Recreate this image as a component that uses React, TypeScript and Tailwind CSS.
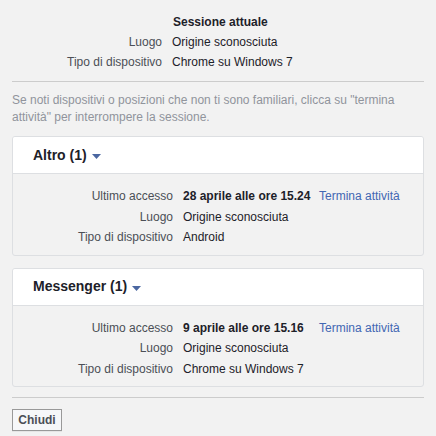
import { ReactNode } from "react";

interface Row {
  label: string;
  value: ReactNode;
  bold?: boolean;
  link?: string;
}

const Caret = () => (
  <svg width="9" height="5" viewBox="0 0 9 5" className="ml-[5px] mt-[3px]">
    <path d="M0 0 H9 L4.5 5 Z" fill="#4b67a1" />
  </svg>
);

const SessionCard = ({ title, rows }: { title: string; rows: Row[] }) => (
  <div className="border border-[#dddfe2] rounded-[3px] bg-[#f2f2f2] overflow-hidden">
    <div className="h-[37px] bg-white border-b border-[#dddfe2] pl-5 flex items-center">
      <span className="text-[14px] font-bold text-[#1d2129]">{title}</span>
      <Caret />
    </div>
    <div className="pt-[12px] pb-[7px]">
      {rows.map((r) => (
        <div key={r.label} className="flex h-[20.5px] items-center text-[12px]">
          <div className="w-[160px] text-right text-[#4b4f56]">{r.label}</div>
          <div
            className={`ml-[10px] w-[136px] text-[#1d2129] ${r.bold ? "font-bold" : ""}`}
          >
            {r.value}
          </div>
          {r.link && <div className="text-[#4267b2]">{r.link}</div>}
        </div>
      ))}
    </div>
  </div>
);

export default function App() {
  return (
    <div
      className="w-[436px] h-[436px] bg-[#f2f2f2] px-3 pt-[12px] text-[#1d2129]"
      style={{ fontFamily: '"Liberation Sans", Arial, sans-serif' }}
    >
      <div className="text-[12px]">
        <div className="flex h-[20px] items-center">
          <div className="w-[150px]" />
          <div className="ml-[11px] font-bold text-[#1d2129]">Sessione attuale</div>
        </div>
        <div className="flex h-[20px] items-center">
          <div className="w-[150px] text-right text-[#4b4f56]">Luogo</div>
          <div className="ml-[10px]">Origine sconosciuta</div>
        </div>
        <div className="flex h-[20px] items-center">
          <div className="w-[150px] text-right text-[#4b4f56]">Tipo di dispositivo</div>
          <div className="ml-[10px]">Chrome su Windows 7</div>
        </div>
      </div>

      <div className="mt-[9px] border-t border-[#cccccc]" />

      <p className="mt-[10px] text-[12px] leading-[17px] text-[#90949c]">
        Se noti dispositivi o posizioni che non ti sono familiari, clicca su "termina
        attività" per interrompere la sessione.
      </p>

      <div className="mt-[10px] flex flex-col gap-[12px]">
        <SessionCard
          title="Altro (1)"
          rows={[
            { label: "Ultimo accesso", value: "28 aprile alle ore 15.24", bold: true, link: "Termina attività" },
            { label: "Luogo", value: "Origine sconosciuta" },
            { label: "Tipo di dispositivo", value: "Android" },
          ]}
        />
        <SessionCard
          title="Messenger (1)"
          rows={[
            { label: "Ultimo accesso", value: "9 aprile alle ore 15.16", bold: true, link: "Termina attività" },
            { label: "Luogo", value: "Origine sconosciuta" },
            { label: "Tipo di dispositivo", value: "Chrome su Windows 7" },
          ]}
        />
      </div>

      <div className="mt-[10px] border-t border-[#cccccc]" />

      <button className="mt-[11px] h-[22px] w-[50px] border border-[#999999] bg-[#f6f7f9] text-[12px] font-bold text-[#4b4f56] shadow-[0_1px_0_rgba(0,0,0,0.05)]">
        Chiudi
      </button>
    </div>
  );
}
